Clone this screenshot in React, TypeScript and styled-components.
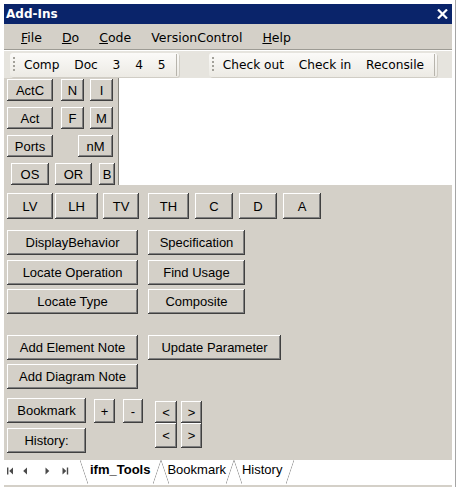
import React from 'react';
import styled, { createGlobalStyle } from 'styled-components';

const GlobalStyle = createGlobalStyle`
  html, body { margin: 0; padding: 0; background: #fff; overflow: hidden; }
  #root { width: 456px; height: 487px; }
`;

const Window = styled.div`
  box-sizing: border-box;
  width: 456px;
  height: 487px;
  padding: 4px 3px 0 4px;
  border-right: 1px solid #a5a5a5;
  display: flex;
  flex-direction: column;
  background: #fff;
`;

const TitleBar = styled.div`
  flex: none;
  height: 20px;
  background: #0a246a;
  display: flex;
  align-items: center;
  justify-content: space-between;
  padding: 0 4px 0 2px;
  color: #fff;
  font: bold 12px "DejaVu Sans", sans-serif;
`;

const MenuBar = styled.div`
  box-sizing: border-box;
  flex: none;
  height: 26px;
  background: #d4d0c8;
  border-bottom: 1px solid #9d9b94;
  display: flex;
  align-items: center;
  padding: 2px 0 0 7px;
  font: 12.5px "DejaVu Sans", sans-serif;
  color: #000;
`;

const MenuItem = styled.span`
  padding: 0 10px;
  u { text-decoration: underline; text-underline-offset: 1px; }
`;

const ToolBand = styled.div`
  box-sizing: border-box;
  flex: none;
  height: 28px;
  background: #e6e4de;
  border-top: 1px solid #fff;
  display: flex;
  align-items: center;
  padding-left: 6px;
`;

const Toolbar = styled.div<{ $ml?: number }>`
  height: 24px;
  margin-left: ${p => p.$ml ?? 0}px;
  padding: 0 2px 0 3px;
  border-radius: 3px;
  background: linear-gradient(#fbfaf8, #eceae4);
  box-shadow: 1px 1px 0 #d0cdc5;
  display: flex;
  align-items: center;
  font: 12.2px "DejaVu Sans", sans-serif;
  color: #000;
`;

const Grip = styled.span`
  width: 2px;
  height: 16px;
  margin-right: 1.5px;
  background: repeating-linear-gradient(to bottom, #a3a19a 0 2px, transparent 2px 4px);
`;

const ToolItem = styled.span`
  padding: 0 7.4px;
  white-space: nowrap;
`;

const ToolSep = styled.span`
  width: 1px;
  height: 22px;
  margin-left: 3px;
  background: #b7b4ac;
`;

const TopSection = styled.div`
  flex: none;
  height: 107px;
  display: flex;
`;

const LeftPanel = styled.div`
  box-sizing: border-box;
  width: 114px;
  background: #d4d0c8;
  padding: 1px 0 0 3px;
  display: flex;
  flex-direction: column;
  gap: 6px;
`;

const PanelRow = styled.div`
  display: flex;
  height: 22px;
`;

const WhiteArea = styled.div`
  flex: 1;
  background: #fff;
  border-left: 1px solid #8a8880;
`;

const Lower = styled.div`
  flex: 1;
  background: #d4d0c8;
  padding-left: 3px;
  display: flex;
  flex-direction: column;
`;

const Row = styled.div<{ $mt: number }>`
  display: flex;
  align-items: flex-start;
  margin-top: ${p => p.$mt}px;
`;

const Col = styled.div<{ $gap: number }>`
  display: flex;
  flex-direction: column;
  gap: ${p => p.$gap}px;
`;

const NavGrid = styled.div`
  display: grid;
  grid-template-columns: 22px 21px;
  grid-template-rows: 22px 25px;
  column-gap: 4px;
  margin: 3px 0 0 12px;
`;

const Btn = styled.button<{ $w: number; $h?: number; $ml?: number; $mt?: number }>`
  box-sizing: border-box;
  flex: none;
  width: ${p => p.$w}px;
  height: ${p => (p.$h ?? 25)}px;
  margin: ${p => p.$mt ?? 0}px 0 0 ${p => p.$ml ?? 0}px;
  padding: 0;
  border: none;
  background: #d4d0c8;
  box-shadow: inset -1px -1px 0 #404040, inset 1px 1px 0 #ffffff, inset -2px -2px 0 #808080;
  font: 13px/1 "Liberation Sans", Arial, sans-serif;
  color: #000;
  display: flex;
  align-items: center;
  justify-content: center;
  white-space: nowrap;
  overflow: hidden;
`;

const TabStrip = styled.div`
  flex: none;
  height: 25px;
  background: #fff;
  display: flex;
  align-items: flex-start;
`;

const NavIcons = styled.svg`
  flex: none;
  margin-top: 7px;
`;

const Tab = styled.div<{ $active?: boolean; $pl: number; $pr: number }>`
  position: relative;
  box-sizing: border-box;
  height: 24px;
  padding: 2px ${p => p.$pr}px 0 ${p => p.$pl}px;
  font: ${p => (p.$active ? 'bold' : 'normal')} 13px/15px "Liberation Sans", Arial, sans-serif;
  color: #000;
  white-space: nowrap;
  &::before, &::after {
    content: '';
    position: absolute;
    top: 0;
    bottom: 0;
    width: 8px;
  }
  &::before {
    left: 0;
    background: linear-gradient(to bottom left, transparent calc(50% - 0.7px), #a9a9a9 50%, transparent calc(50% + 0.7px));
  }
  &::after {
    right: 0;
    background: linear-gradient(to bottom right, transparent calc(50% - 0.7px), #a9a9a9 50%, transparent calc(50% + 0.7px));
  }
`;

const BottomLine = styled.div`
  flex: none;
  height: 2px;
  background: #d4d0c8;
`;

type B = { label: string; w: number; ml?: number };

const panelRows: B[][] = [
  [{ label: 'ActC', w: 46 }, { label: 'N', w: 23, ml: 8 }, { label: 'I', w: 23, ml: 6 }],
  [{ label: 'Act', w: 46 }, { label: 'F', w: 23, ml: 8 }, { label: 'M', w: 23, ml: 6 }],
  [{ label: 'Ports', w: 46 }, { label: 'nM', w: 35, ml: 25 }],
  [{ label: 'OS', w: 38, ml: 4 }, { label: 'OR', w: 37, ml: 6 }, { label: 'B', w: 16, ml: 7 }],
];

const viewRow: B[] = [
  { label: 'LV', w: 46 },
  { label: 'LH', w: 43, ml: 2 },
  { label: 'TV', w: 36, ml: 5 },
  { label: 'TH', w: 41, ml: 9 },
  { label: 'C', w: 38, ml: 6 },
  { label: 'D', w: 38, ml: 6 },
  { label: 'A', w: 38, ml: 6 },
];

const pairRows: { mt: number; left: string; right?: string; rw?: number }[] = [
  { mt: 11, left: 'DisplayBehavior', right: 'Specification', rw: 97 },
  { mt: 5, left: 'Locate Operation', right: 'Find Usage', rw: 97 },
  { mt: 4, left: 'Locate Type', right: 'Composite', rw: 97 },
  { mt: 21, left: 'Add Element Note', right: 'Update Parameter', rw: 133 },
  { mt: 4, left: 'Add Diagram Note' },
];

const CloseIcon = () => (
  <svg width="11" height="10" viewBox="0 0 11 10">
    <path d="M1 0.5 L10 9.5 M10 0.5 L1 9.5" stroke="#fff" strokeWidth="2.2" />
  </svg>
);

export default function App() {
  return (
    <>
      <GlobalStyle />
      <Window>
        <TitleBar>
          <span>Add-Ins</span>
          <CloseIcon />
        </TitleBar>
        <MenuBar>
          <MenuItem><u>F</u>ile</MenuItem>
          <MenuItem><u>D</u>o</MenuItem>
          <MenuItem><u>C</u>ode</MenuItem>
          <MenuItem>VersionControl</MenuItem>
          <MenuItem><u>H</u>elp</MenuItem>
        </MenuBar>
        <ToolBand>
          <Toolbar>
            <Grip />
            <ToolItem>Comp</ToolItem>
            <ToolItem>Doc</ToolItem>
            <ToolItem>3</ToolItem>
            <ToolItem>4</ToolItem>
            <ToolItem>5</ToolItem>
            <ToolSep />
          </Toolbar>
          <Toolbar $ml={30}>
            <Grip />
            <ToolItem>Check out</ToolItem>
            <ToolItem>Check in</ToolItem>
            <ToolItem>Reconsile</ToolItem>
            <ToolSep />
          </Toolbar>
        </ToolBand>
        <TopSection>
          <LeftPanel>
            {panelRows.map((r, i) => (
              <PanelRow key={i}>
                {r.map(b => (
                  <Btn key={b.label} $w={b.w} $h={22} $ml={b.ml}>{b.label}</Btn>
                ))}
              </PanelRow>
            ))}
          </LeftPanel>
          <WhiteArea />
        </TopSection>
        <Lower>
          <Row $mt={8}>
            {viewRow.map(b => (
              <Btn key={b.label} $w={b.w} $h={26} $ml={b.ml}>{b.label}</Btn>
            ))}
          </Row>
          {pairRows.map(r => (
            <Row key={r.left} $mt={r.mt}>
              <Btn $w={131}>{r.left}</Btn>
              {r.right && <Btn $w={r.rw!} $ml={10}>{r.right}</Btn>}
            </Row>
          ))}
          <Row $mt={9}>
            <Col $gap={5}>
              <Btn $w={79}>Bookmark</Btn>
              <Btn $w={79}>History:</Btn>
            </Col>
            <Btn $w={21} $h={24} $ml={8} $mt={1}>+</Btn>
            <Btn $w={20} $h={24} $ml={8} $mt={1}>-</Btn>
            <NavGrid>
              <Btn $w={22} $h={22}>&lt;</Btn>
              <Btn $w={21} $h={22}>&gt;</Btn>
              <Btn $w={22}>&lt;</Btn>
              <Btn $w={21}>&gt;</Btn>
            </NavGrid>
          </Row>
        </Lower>
        <TabStrip>
          <NavIcons width="76" height="8" viewBox="0 0 76 8">
            <g fill="#4a4a4a">
              <rect x="3" y="0.5" width="1.4" height="7" />
              <polygon points="9,0.5 9,7.5 5.2,4" />
              <polygon points="23,0.5 23,7.5 19.2,4" />
              <polygon points="41.5,0.5 41.5,7.5 45.3,4" />
              <polygon points="58.5,0.5 58.5,7.5 62.3,4" />
              <rect x="62.8" y="0.5" width="1.4" height="7" />
            </g>
          </NavIcons>
          <Tab $active $pl={10} $pr={11}>ifm_Tools</Tab>
          <Tab $pl={6} $pr={8}>Bookmark</Tab>
          <Tab $pl={8} $pr={12}>History</Tab>
        </TabStrip>
        <BottomLine />
      </Window>
    </>
  );
}
